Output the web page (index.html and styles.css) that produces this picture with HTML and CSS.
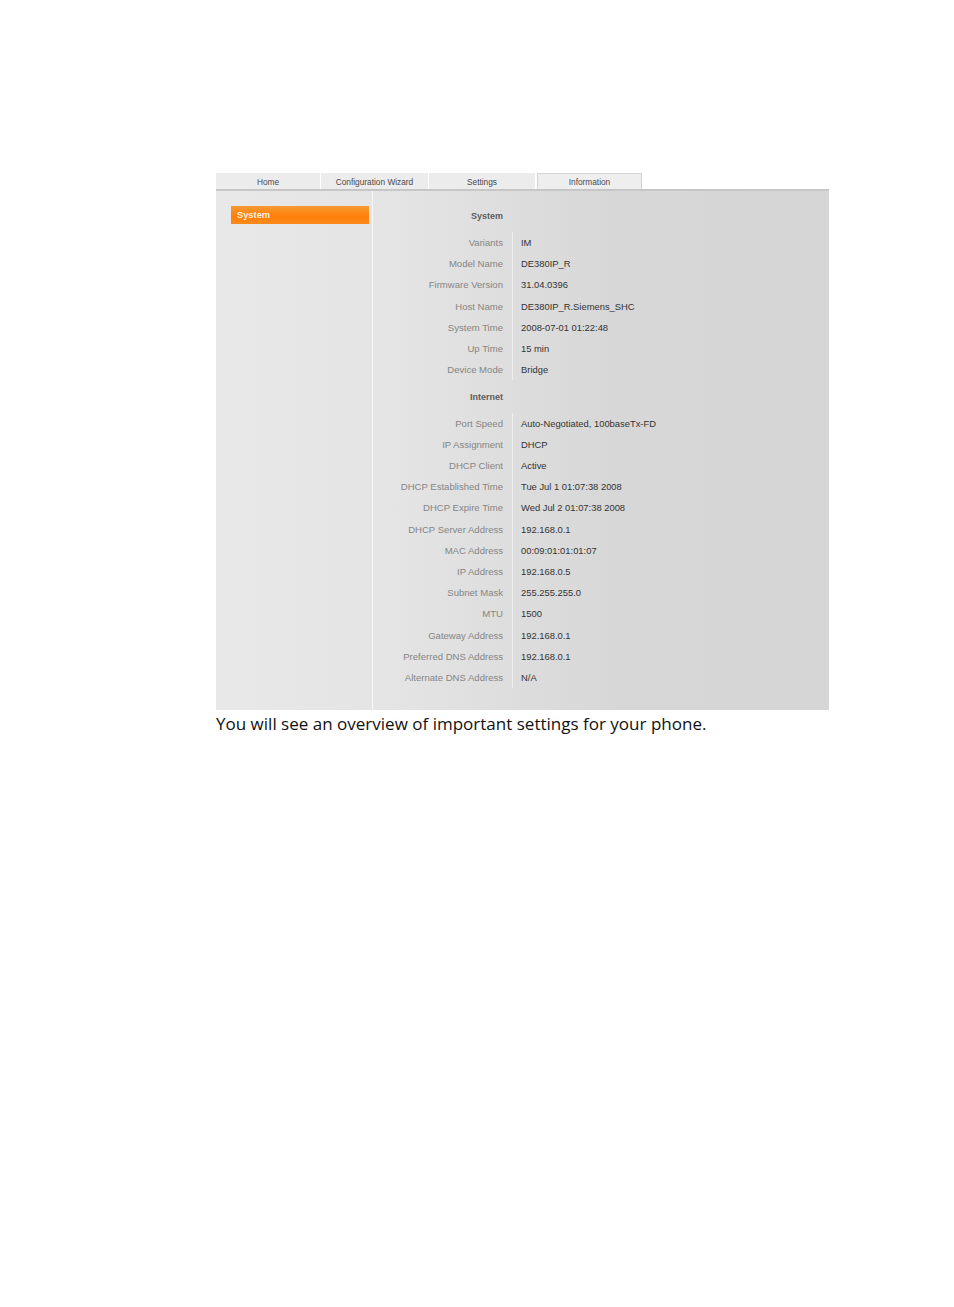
FILE: index.html
```html
<!DOCTYPE html>
<html lang="en">
<head>
    <meta charset="UTF-8">
    <title>Information</title>
    <link rel="stylesheet" href="styles.css">
</head>
<body>
    <div class="shot">
        <div class="tabs">
            <div class="tab tab-home">Home</div>
            <div class="tab tab-wizard">Configuration Wizard</div>
            <div class="tab tab-settings">Settings</div>
            <div class="tab tab-info">Information</div>
        </div>
        <div class="panel">
            <div class="side">
                <div class="side-item">System</div>
            </div>
            <div class="main">
                <div class="head">System</div>
                <div class="group">
                    <div class="row"><span class="label">Variants</span><span class="value">IM</span></div>
                    <div class="row"><span class="label">Model Name</span><span class="value">DE380IP_R</span></div>
                    <div class="row"><span class="label">Firmware Version</span><span class="value">31.04.0396</span></div>
                    <div class="row"><span class="label">Host Name</span><span class="value">DE380IP_R.Siemens_SHC</span></div>
                    <div class="row"><span class="label">System Time</span><span class="value">2008-07-01 01:22:48</span></div>
                    <div class="row"><span class="label">Up Time</span><span class="value">15 min</span></div>
                    <div class="row"><span class="label">Device Mode</span><span class="value">Bridge</span></div>
                </div>
                <div class="head head-second">Internet</div>
                <div class="group">
                    <div class="row"><span class="label">Port Speed</span><span class="value">Auto-Negotiated, 100baseTx-FD</span></div>
                    <div class="row"><span class="label">IP Assignment</span><span class="value">DHCP</span></div>
                    <div class="row"><span class="label">DHCP Client</span><span class="value">Active</span></div>
                    <div class="row"><span class="label">DHCP Established Time</span><span class="value">Tue Jul 1 01:07:38 2008</span></div>
                    <div class="row"><span class="label">DHCP Expire Time</span><span class="value">Wed Jul 2 01:07:38 2008</span></div>
                    <div class="row"><span class="label">DHCP Server Address</span><span class="value">192.168.0.1</span></div>
                    <div class="row"><span class="label">MAC Address</span><span class="value">00:09:01:01:01:07</span></div>
                    <div class="row"><span class="label">IP Address</span><span class="value">192.168.0.5</span></div>
                    <div class="row"><span class="label">Subnet Mask</span><span class="value">255.255.255.0</span></div>
                    <div class="row"><span class="label">MTU</span><span class="value">1500</span></div>
                    <div class="row"><span class="label">Gateway Address</span><span class="value">192.168.0.1</span></div>
                    <div class="row"><span class="label">Preferred DNS Address</span><span class="value">192.168.0.1</span></div>
                    <div class="row"><span class="label">Alternate DNS Address</span><span class="value">N/A</span></div>
                </div>
            </div>
        </div>
    </div>
    <p class="caption">You will see an overview of important settings for your phone.</p>
</body>
</html>
```

FILE: styles.css
```css
html, body {
    margin: 0;
    padding: 0;
    background-color: #fff;
}
body {
    padding: 173px 0 0 216px;
    height: 1134px;
    overflow: hidden;
    font-family: "Liberation Sans", Arial, sans-serif;
}
.shot {
    width: 613px;
}
.tabs {
    display: flex;
    height: 16px;
}
.tab {
    height: 16px;
    line-height: 18px;
    font-size: 8.3px;
    text-align: center;
    color: #4a4a4a;
    background-color: #ececec;
    box-sizing: border-box;
}
.tab-home {
    width: 104px;
    margin-right: 1px;
}
.tab-wizard {
    width: 107px;
    margin-right: 1px;
}
.tab-settings {
    width: 106px;
    margin-right: 2px;
}
.tab-info {
    width: 105px;
    background-color: #eeeeee;
    border: 1px solid #d4d4d4;
    border-bottom: none;
    line-height: 16px;
}
.panel {
    display: flex;
    height: 519px;
    border-top: 2px solid #c6c6c6;
    background: linear-gradient(to right, #e8e8e8, #e4e4e4 30%, #d7d7d7 65%, #d6d6d6);
    box-sizing: content-box;
}
.side {
    width: 157px;
    border-right: 1px solid #f6f6f6;
    padding: 15px 0 0 15px;
    box-sizing: border-box;
}
.side-item {
    width: 138px;
    height: 18px;
    line-height: 18px;
    padding-left: 6px;
    box-sizing: border-box;
    font-size: 9.3px;
    font-weight: bold;
    color: #fff1dc;
    background: linear-gradient(to bottom, #f59a33, #ff7f08 60%, #f98a1e);
}
.main {
    flex: 1;
    font-size: 9.55px;
}
.head {
    width: 130px;
    height: 21px;
    line-height: 21px;
    margin-top: 15px;
    margin-bottom: 5px;
    font-size: 9px;
    text-align: right;
    font-weight: bold;
    color: #5c5c5c;
}
.head-second {
    margin-top: 6.4px;
}
.group {
    display: flex;
    flex-direction: column;
}
.row {
    display: flex;
    align-items: baseline;
    height: 21.2px;
    line-height: 21.2px;
}
.label {
    width: 130px;
    text-align: right;
    color: #858585;
    white-space: nowrap;
}
.value {
    margin-left: 9px;
    padding-left: 8px;
    border-left: 1px solid #efefef;
    font-size: 9.4px;
    color: #333;
    white-space: nowrap;
    flex: 1;
}
.caption {
    margin: 2px 0 0;
    font-family: "Open Sans", sans-serif;
    font-size: 17.03px;
    line-height: 24px;
    color: #111;
    white-space: nowrap;
}
```
